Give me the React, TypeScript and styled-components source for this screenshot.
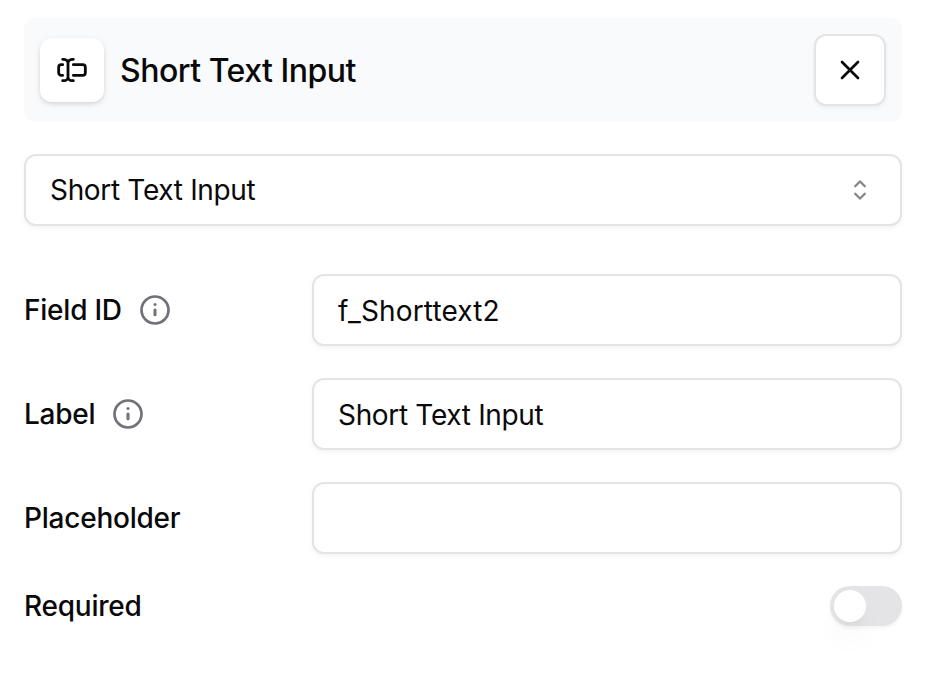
import React, { useState } from 'react';
import styled, { createGlobalStyle, css } from 'styled-components';

const Global = createGlobalStyle`
  * { box-sizing: border-box; }
  body { margin: 0; background: #fff; color: #09090b; font-family: Inter, "Liberation Sans", sans-serif; }
  button, input { font: inherit; color: inherit; }
`;

const surface = css`
  background: #fff;
  border: 2px solid #e4e4e7;
  border-radius: 12px;
  box-shadow: 0 2px 4px rgba(0, 0, 0, 0.05);
`;

const Panel = styled.main`
  width: 928px;
  height: 674px;
  padding: 18px 26px 0 24px;
`;

const Header = styled.header`
  display: flex;
  align-items: center;
  height: 104px;
  padding: 0 16px;
  border-radius: 12px;
  background: #f9fafb;
`;

const IconTile = styled.div`
  display: grid;
  place-items: center;
  width: 64px;
  height: 64px;
  border-radius: 12px;
  background: #fff;
  box-shadow: 0 2px 6px rgba(0, 0, 0, 0.1), 0 2px 4px rgba(0, 0, 0, 0.06);
`;

const Title = styled.h1`
  flex: 1;
  margin: 2px 0 0 16px;
  font-size: 32px;
  line-height: 48px;
  font-weight: 550;
  letter-spacing: -0.49px;
`;

const CloseButton = styled.button`
  ${surface}
  display: grid;
  place-items: center;
  width: 72px;
  height: 72px;
  padding: 0;
`;

const Select = styled.button`
  ${surface}
  display: flex;
  align-items: center;
  justify-content: space-between;
  width: 100%;
  height: 72px;
  margin-top: 32px;
  padding: 0 24px;
  font-size: 28px;
  letter-spacing: -0.33px;
  text-align: left;
`;

const Fields = styled.div`
  display: grid;
  gap: 32px;
  margin-top: 48px;
`;

const Row = styled.div`
  display: grid;
  grid-template-columns: 288px 1fr;
  align-items: center;
`;

const Label = styled.label`
  display: flex;
  align-items: center;
  gap: 16px;
  font-size: 28px;
  line-height: 40px;
  font-weight: 550;
  letter-spacing: -0.23px;
`;

const TextInput = styled.input<{ $tracking: number }>`
  ${surface}
  width: 100%;
  height: 72px;
  padding: 2px 24px 0;
  font-size: 28px;
  letter-spacing: ${(p) => p.$tracking}px;
  outline: none;
`;

const Toggle = styled.button<{ $on: boolean }>`
  display: flex;
  justify-content: ${(p) => (p.$on ? 'flex-end' : 'flex-start')};
  justify-self: end;
  width: 72px;
  height: 40px;
  padding: 4px;
  border: 0;
  border-radius: 20px;
  background: ${(p) => (p.$on ? '#18181b' : '#e4e4e7')};
  box-shadow: 0 2px 4px rgba(0, 0, 0, 0.05);
`;

const Knob = styled.span`
  width: 32px;
  height: 32px;
  border-radius: 50%;
  background: #fff;
  box-shadow: 0 20px 30px -6px rgba(0, 0, 0, 0.07), 0 8px 12px -8px rgba(0, 0, 0, 0.08);
`;

const TextInputIcon = () => (
  <svg width="32" height="32" viewBox="0 0 24 24" fill="none" stroke="currentColor" strokeWidth="2.1" strokeLinecap="round" strokeLinejoin="round">
    <path d="M5 4h1a3 3 0 0 1 3 3 3 3 0 0 1 3-3h1M13 20h-1a3 3 0 0 1-3-3 3 3 0 0 1-3 3H5M5 16H4a2 2 0 0 1-2-2v-4a2 2 0 0 1 2-2h1M13 8h7a2 2 0 0 1 2 2v4a2 2 0 0 1-2 2h-7M9 7v10" />
  </svg>
);

const CloseIcon = () => (
  <svg width="32" height="32" viewBox="0 0 24 24" fill="none" stroke="currentColor" strokeWidth="2" strokeLinecap="round">
    <path d="M18 6 6 18M6 6l12 12" />
  </svg>
);

const SelectorIcon = () => (
  <svg width="32" height="32" viewBox="0 0 15 15" fill="#848486" stroke="#848486" strokeWidth="0.16">
    <path fillRule="evenodd" clipRule="evenodd" d="M4.93179 5.43179C4.75605 5.60753 4.75605 5.89245 4.93179 6.06819C5.10753 6.24392 5.39245 6.24392 5.56819 6.06819L7.49999 4.13638L9.43179 6.06819C9.60753 6.24392 9.89245 6.24392 10.0682 6.06819C10.2439 5.89245 10.2439 5.60753 10.0682 5.43179L7.81819 3.18179C7.73379 3.0974 7.61933 3.04999 7.49999 3.04999C7.38064 3.04999 7.26618 3.0974 7.18179 3.18179L4.93179 5.43179ZM10.0682 9.56819C10.2439 9.39245 10.2439 9.10753 10.0682 8.93179C9.89245 8.75606 9.60753 8.75606 9.43179 8.93179L7.49999 10.8636L5.56819 8.93179C5.39245 8.75606 5.10753 8.75606 4.93179 8.93179C4.75605 9.10753 4.75605 9.39245 4.93179 9.56819L7.18179 11.8182C7.35753 11.9939 7.64245 11.9939 7.81819 11.8182L10.0682 9.56819Z" />
  </svg>
);

const InfoIcon = () => (
  <svg width="34" height="34" viewBox="0 0 34 34" fill="none" stroke="#71717a" strokeWidth="2.7" strokeLinecap="round">
    <circle cx="17" cy="17" r="13.5" />
    <path d="M17 17v4.7" strokeWidth="3.1" />
    <path d="M17 11.5h.01" strokeWidth="3" />
  </svg>
);

export default function App() {
  const [fieldId, setFieldId] = useState('f_Shorttext2');
  const [label, setLabel] = useState('Short Text Input');
  const [placeholder, setPlaceholder] = useState('');
  const [required, setRequired] = useState(false);

  return (
    <>
      <Global />
      <Panel>
        <Header>
          <IconTile><TextInputIcon /></IconTile>
          <Title>Short Text Input</Title>
          <CloseButton aria-label="Close"><CloseIcon /></CloseButton>
        </Header>
        <Select><span>Short Text Input</span><SelectorIcon /></Select>
        <Fields>
          <Row>
            <Label htmlFor="field-id">Field ID <InfoIcon /></Label>
            <TextInput id="field-id" $tracking={0.13} value={fieldId} onChange={(e) => setFieldId(e.target.value)} />
          </Row>
          <Row>
            <Label htmlFor="label">Label <InfoIcon /></Label>
            <TextInput id="label" $tracking={-0.33} value={label} onChange={(e) => setLabel(e.target.value)} />
          </Row>
          <Row>
            <Label htmlFor="placeholder">Placeholder</Label>
            <TextInput id="placeholder" $tracking={-0.33} value={placeholder} onChange={(e) => setPlaceholder(e.target.value)} />
          </Row>
          <Row>
            <Label htmlFor="required">Required</Label>
            <Toggle id="required" role="switch" aria-checked={required} $on={required} onClick={() => setRequired(!required)}><Knob /></Toggle>
          </Row>
        </Fields>
      </Panel>
    </>
  );
}
